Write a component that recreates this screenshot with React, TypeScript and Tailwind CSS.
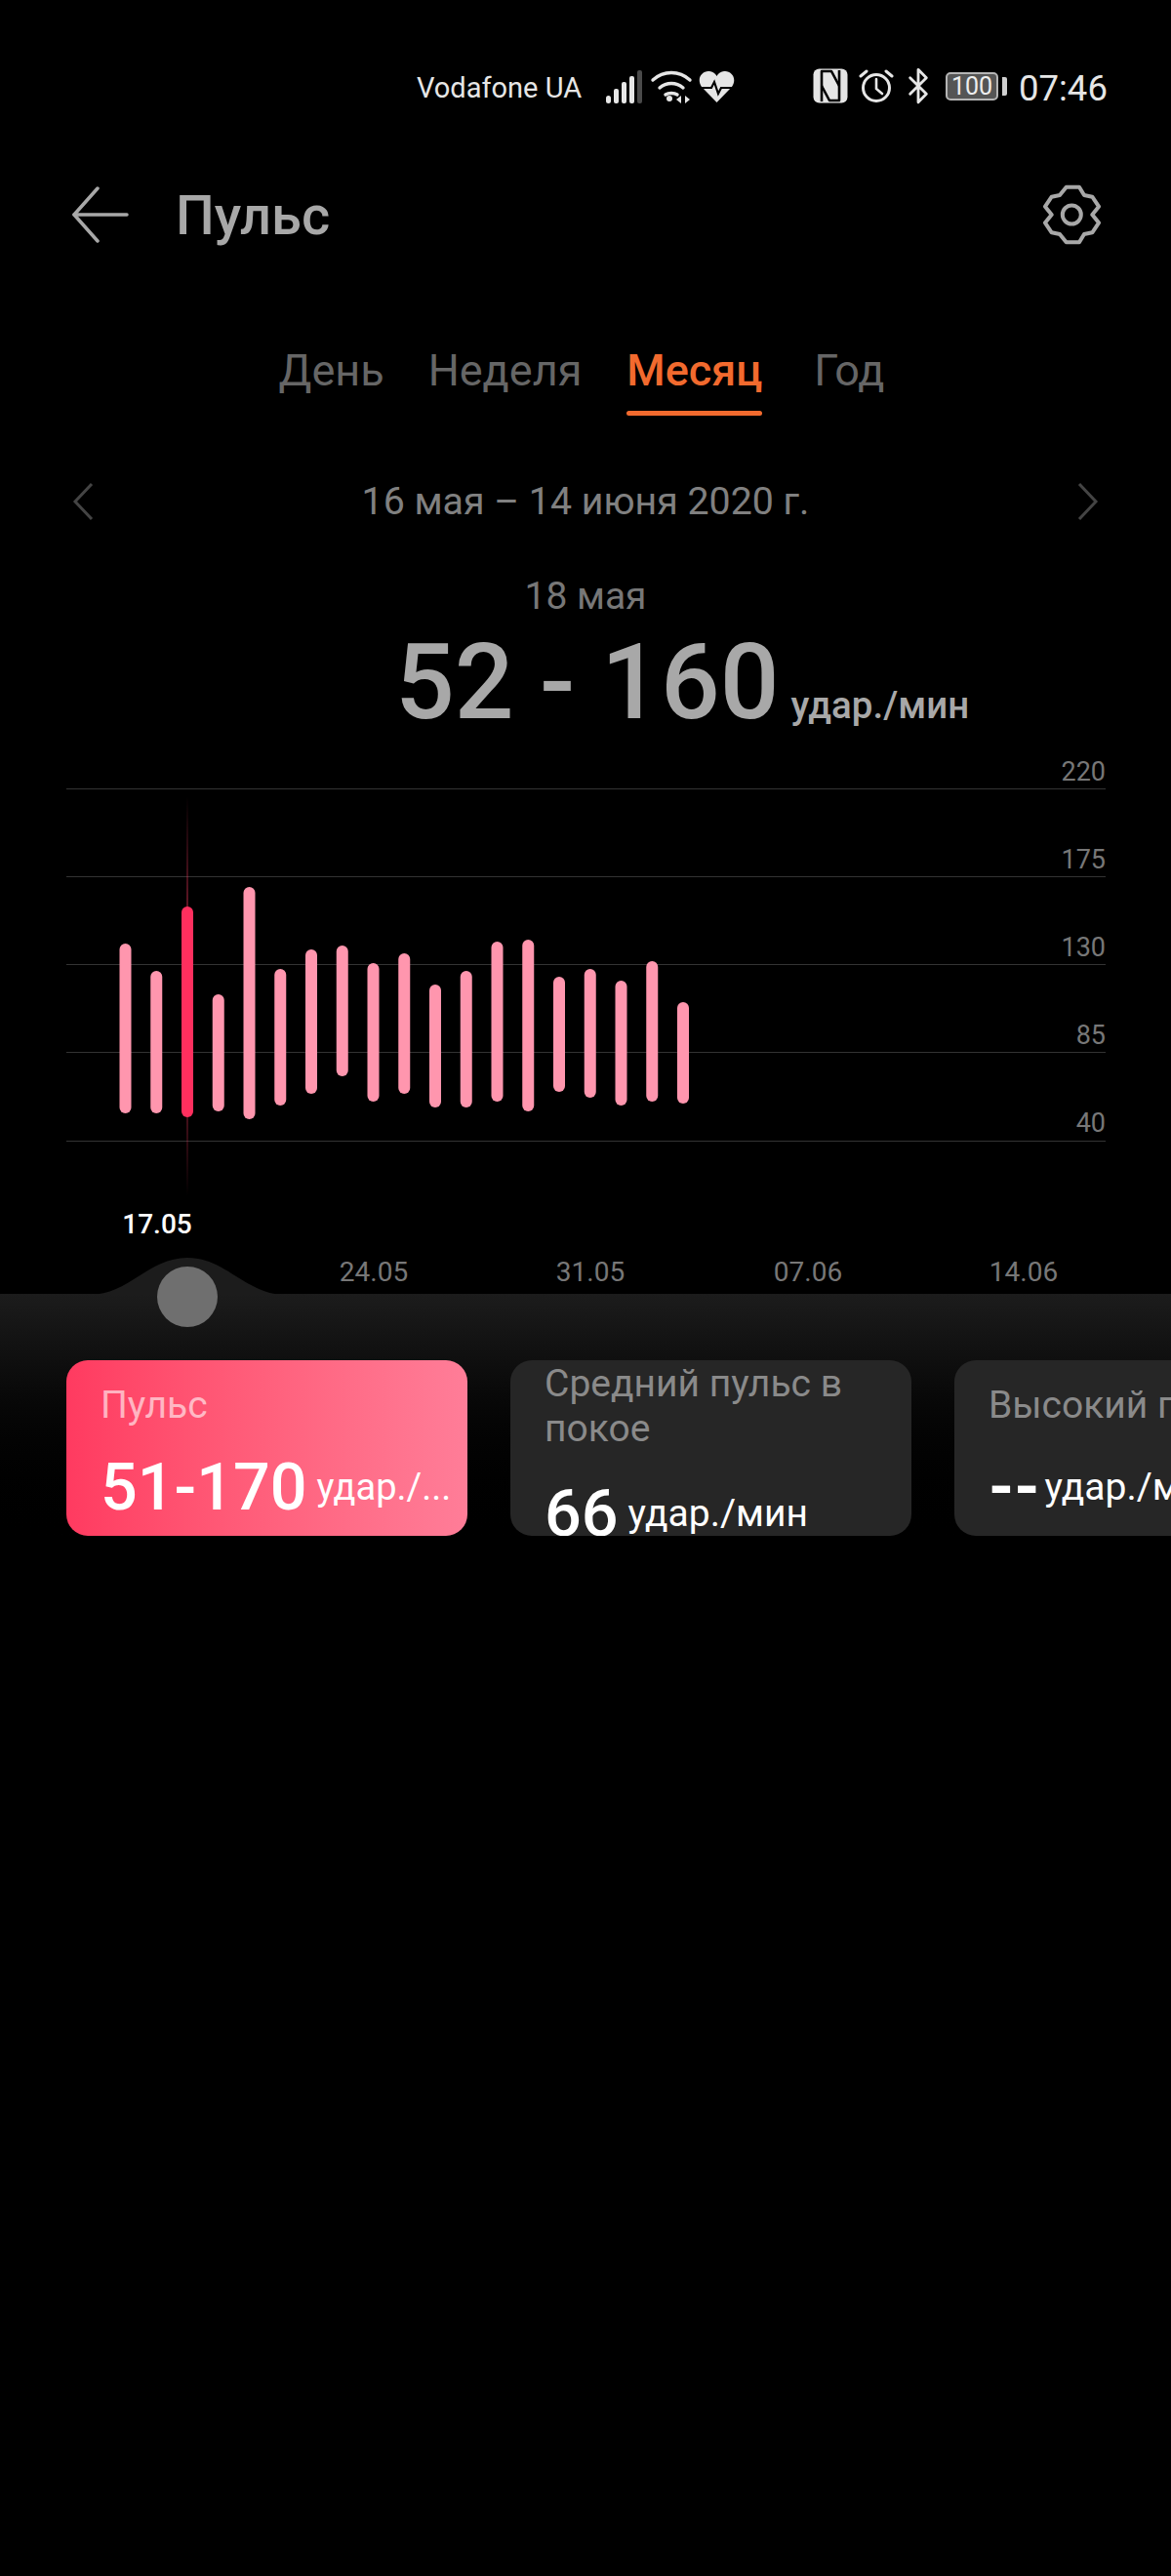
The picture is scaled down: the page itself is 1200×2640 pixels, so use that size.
import { Bluetooth } from 'lucide-react';

const gridLines = [808, 898, 988, 1078, 1169];
const axisLabels = [
  { y: 800, text: '220' },
  { y: 890, text: '175' },
  { y: 980, text: '130' },
  { y: 1070, text: '85' },
  { y: 1160, text: '40' },
];
const bars = [
  [967, 1141], [995, 1141], [929, 1145], [1019, 1139], [909, 1147], [993, 1133], [973, 1121],
  [969, 1103], [987, 1129], [977, 1121], [1009, 1135], [995, 1135], [965, 1129], [963, 1139],
  [1001, 1119], [993, 1125], [1005, 1133], [985, 1129], [1027, 1131],
];
const dates = [
  { x: 383, text: '24.05' },
  { x: 605, text: '31.05' },
  { x: 828, text: '07.06' },
  { x: 1049, text: '14.06' },
];
const CHART_TOP = 780;

const StatusBar = () => (
  <div className="flex h-[160px] items-start pl-[427px] pt-[70px] text-[#e6e6e6]">
    <span className="w-[193px] text-[29px] leading-[40px]">Vodafone UA</span>
    <svg width="38" height="36" viewBox="0 0 38 36" className="shrink-0">
      <rect x="1" y="28" width="5" height="8" rx="2.5" fill="#e6e6e6" />
      <rect x="9" y="21" width="5" height="15" rx="2" fill="#e6e6e6" />
      <rect x="17" y="14" width="5" height="22" rx="2" fill="#e6e6e6" />
      <rect x="25" y="8" width="5" height="28" rx="2" fill="#e6e6e6" />
      <rect x="33" y="2" width="5" height="34" rx="2" fill="#4a4a4a" />
    </svg>
    <svg width="44" height="36" viewBox="0 0 44 36" className="ml-[8px] shrink-0" fill="none" stroke="#e6e6e6" strokeWidth="3.4" strokeLinecap="round">
      <path d="M3 12 C14 2 30 2 41 12" />
      <path d="M10 20 C17 14 27 14 34 20" />
      <path d="M16 27 C19 25 25 25 28 27" />
      <circle cx="20" cy="31" r="3" fill="#e6e6e6" stroke="none" />
      <path d="M32 28 L27 32 L32 36 Z" fill="#e6e6e6" stroke="none" />
      <path d="M36 28 L41 32 L36 36 Z" fill="#e6e6e6" stroke="none" />
    </svg>
    <svg width="37" height="34" viewBox="0 0 37 34" className="ml-[6px] mt-[2px] shrink-0">
      <path d="M18.5 33 L3 17 C-3 8 4 0 11 1 C14 1.500 17 3 18.5 6 C20 3 23 1.500 26 1 C33 0 40 8 34 17 Z" fill="#e6e6e6" />
      <path d="M0 18 H13 L16 12 L20 24 L23 18 H37" fill="none" stroke="#000" strokeWidth="2.2" />
    </svg>
    <svg width="36" height="36" viewBox="0 0 36 36" className="ml-[80px] shrink-0">
      <rect x="0.500" y="0.500" width="35" height="35" rx="6" fill="#e6e6e6" />
      <g fill="none" stroke="#000" strokeWidth="2.6" strokeLinejoin="round">
        <path d="M9 34 V3 H19 L27 18" />
        <path d="M27 2 V33 H17 L9 18" />
      </g>
    </svg>
    <svg width="36" height="36" viewBox="0 0 36 36" className="ml-[11px] shrink-0" fill="none" stroke="#e6e6e6" strokeWidth="3" strokeLinecap="round">
      <circle cx="18" cy="20" r="13.500" />
      <path d="M18 11 V21 L24 26" strokeWidth="2.600" />
      <path d="M2 8 L8 3" />
      <path d="M34 8 L28 3" />
    </svg>
    <Bluetooth className="ml-[5px] mt-[-2px] shrink-0" size={40} stroke="#e6e6e6" strokeWidth={1.7} />
    <div className="ml-[8px] mt-[4px] flex shrink-0 items-center">
      <div className="flex h-[29px] w-[54px] items-center justify-center rounded-[5px] border-2 border-[#b5b5b5] bg-[#555] p-[1px] text-[25px] leading-none text-[#eee]">100</div>
      <div className="ml-[4px] h-[19px] w-[5px] rounded-r-[2px] bg-[#d0d0d0]" />
    </div>
    <span className="ml-[12px] mt-[-1px] text-[36.5px] leading-[44px]">07:46</span>
  </div>
);

const Header = () => (
  <div className="flex h-[120px] items-center justify-between pl-[74px] pr-[72px]">
    <div className="flex items-center">
      <svg width="58" height="58" viewBox="0 0 58 58" fill="none" stroke="#a8a8a8" strokeWidth="3.500" strokeLinecap="round" strokeLinejoin="round">
        <path d="M26 2 L2 29 L26 56" />
        <path d="M2 29 H56" />
      </svg>
      <h1 className="ml-[48px] mt-[2px] text-[56px] font-medium leading-[60px] text-[#a8a8a8]">Пульс</h1>
    </div>
    <svg width="62" height="64" viewBox="15 8 62 64" fill="none" stroke="#a8a8a8" strokeWidth="4" strokeLinejoin="round">
      <path d="M41.7 11.700 H55 L60 20 L68.300 21.700 L75 31.700 L68.300 40 L75 48.300 L68.300 58.300 L60 60 L55 68.300 H41.700 L35 60 L26.700 58.300 L20 48.300 L26.700 40 L20 31.700 L26.700 21.700 L35 20 Z" />
      <circle cx="47.300" cy="40" r="9.500" />
    </svg>
  </div>
);

const Tabs = () => (
  <div className="flex h-[190px] justify-center pr-[8px] pt-[73px] text-[45px] leading-[54px] text-[#666]">
    <span>День</span>
    <span className="ml-[45px]">Неделя</span>
    <div className="ml-[46px] flex flex-col items-stretch">
      <span className="font-medium text-[#f26a2e]">Месяц</span>
      <div className="mt-[14px] h-[5px] rounded-full bg-[#f26a2e]" />
    </div>
    <span className="ml-[53px]">Год</span>
  </div>
);

const DateRow = () => (
  <div className="flex h-[118px] items-center justify-between px-[74px] pb-[30px]">
    <svg width="22" height="40" viewBox="0 0 22 40" fill="none" stroke="#444" strokeWidth="3">
      <path d="M20 2 L3 20 L20 38" />
    </svg>
    <span className="text-[39.300px] leading-[46px] text-[#808080]">16 мая – 14 июня 2020 г.</span>
    <svg width="22" height="40" viewBox="0 0 22 40" fill="none" stroke="#444" strokeWidth="3">
      <path d="M2 2 L19 20 L2 38" />
    </svg>
  </div>
);

const Reading = () => (
  <div className="flex h-[192px] flex-col items-center">
    <span className="text-[39px] leading-[46px] text-[#777]">18 мая</span>
    <div className="mt-[10px] flex items-baseline pl-[198px] text-[#a8a8a8]">
      <span className="text-[107px] font-medium leading-[112px]">52 - 160</span>
      <span className="ml-[12px] text-[38.5px] font-medium leading-[44px]">удар./мин</span>
    </div>
  </div>
);

// grid, bars and axis labels are one drawing
const Chart = () => (
  <svg width="1200" height="546" viewBox={`0 ${CHART_TOP} 1200 546`} className="block">
    <defs>
      <linearGradient id="marker" x1="0" y1="0" x2="0" y2="1">
        <stop offset="0" stopColor="#ff3a60" stopOpacity="0" />
        <stop offset="0.4" stopColor="#ff3a60" stopOpacity="0.55" />
        <stop offset="0.6" stopColor="#ff3a60" stopOpacity="0.55" />
        <stop offset="1" stopColor="#ff3a60" stopOpacity="0" />
      </linearGradient>
    </defs>
    {gridLines.map((y) => (
      <line key={y} x1="68" x2="1133" y1={y + 0.5} y2={y + 0.5} stroke="#333" strokeWidth="1" />
    ))}
    <rect x="191" y="816" width="2" height="410" fill="url(#marker)" />
    {bars.map(([top, bottom], i) => (
      <rect
        key={i}
        x={122.5 + i * 31.75}
        y={top}
        width="12"
        height={bottom - top}
        rx="6"
        fill={i === 2 ? '#ff2f5e' : '#ff96ae'}
      />
    ))}
    {axisLabels.map((l) => (
      <text key={l.text} x="1133" y={l.y} textAnchor="end" fontSize="27" fill="#777">{l.text}</text>
    ))}
    <text x="161" y="1264" textAnchor="middle" fontSize="28" fontWeight="500" fill="#fff">17.05</text>
    {dates.map((d) => (
      <text key={d.text} x={d.x} y="1313" textAnchor="middle" fontSize="28" fill="#777">{d.text}</text>
    ))}
  </svg>
);

const Slider = () => (
  <>
    <svg width="200" height="38" viewBox="0 0 200 38" className="absolute left-[92px] top-[-37px]">
      <path d="M0 38 C40 38 60 0 100 0 C140 0 160 38 200 38 Z" fill="#1c1c1c" />
    </svg>
    <div className="absolute left-[161px] top-[-28px] h-[62px] w-[62px] rounded-full bg-[#6f6f6f]" />
  </>
);

const App = () => (
  <div className="min-h-[2640px] bg-black font-['Roboto',sans-serif]">
    <StatusBar />
    <Header />
    <Tabs />
    <DateRow />
    <Reading />
    <Chart />
    <div className="relative h-[264px] bg-gradient-to-b from-[#1c1c1c] to-black pt-[68px]">
      <Slider />
      <div className="flex gap-[44px] overflow-hidden pl-[68px]">
        <div className="h-[180px] w-[411px] shrink-0 overflow-hidden rounded-[22px] bg-gradient-to-r from-[#ff3a60] to-[#ff7d98] px-[35px] pt-[23px]">
          <div className="text-[39px] leading-[46px] text-white/60">Пульс</div>
          <div className="mt-[21px] flex items-center whitespace-nowrap text-white">
            <span className="text-[66.500px] font-medium leading-[80px]">51-170</span>
            <span className="ml-[10px] text-[38px] leading-[44px]">удар./...</span>
          </div>
        </div>
        <div className="h-[180px] w-[411px] shrink-0 overflow-hidden rounded-[22px] bg-[#262626] px-[35px] pt-[1px]">
          <div className="text-[39px] leading-[46px] text-[#8a8a8a]">Средний пульс в покое</div>
          <div className="mt-[24px] flex items-center whitespace-nowrap text-white">
            <span className="text-[66.500px] font-medium leading-[80px]">66</span>
            <span className="ml-[10px] text-[39px] leading-[44px]">удар./мин</span>
          </div>
        </div>
        <div className="h-[180px] w-[411px] shrink-0 overflow-hidden rounded-[22px] bg-[#262626] px-[35px] pt-[23px]">
          <div className="whitespace-nowrap text-[39px] leading-[46px] text-[#8a8a8a]">Высокий пульс</div>
          <div className="mt-[21px] flex items-center whitespace-nowrap text-white">
            <span className="text-[66.500px] font-bold leading-[80px]">--</span>
            <span className="ml-[5px] text-[39px] leading-[44px]">удар./мин</span>
          </div>
        </div>
      </div>
    </div>
  </div>
);

export default App;
